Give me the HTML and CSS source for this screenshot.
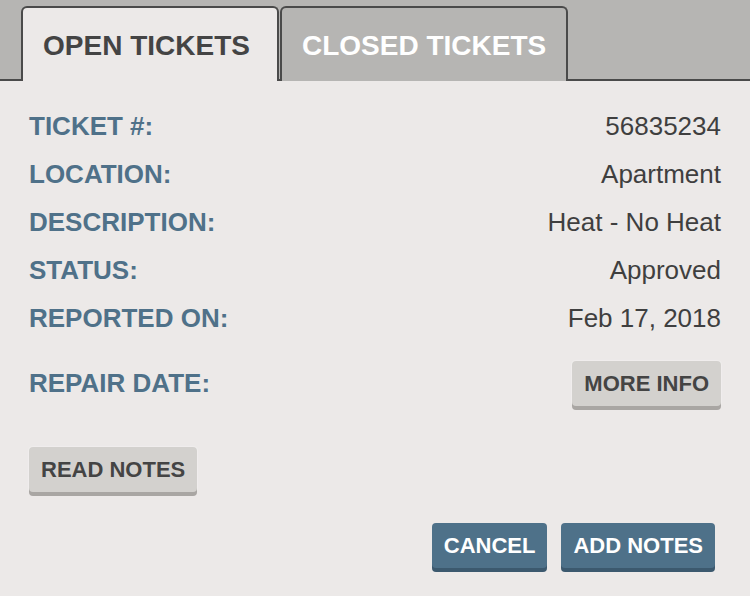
FILE: index.html
```html
<!DOCTYPE html>
<html>
<head>
<meta charset="utf-8">
<link rel="stylesheet" href="styles.css">
</head>
<body>
<div class="page">
  <div class="tabs">
    <div class="tab tab-active">OPEN TICKETS</div>
    <div class="tab tab-inactive">CLOSED TICKETS</div>
  </div>
  <div class="content">
    <div class="row"><span class="label">TICKET #:</span><span class="value">56835234</span></div>
    <div class="row"><span class="label">LOCATION:</span><span class="value">Apartment</span></div>
    <div class="row"><span class="label">DESCRIPTION:</span><span class="value">Heat - No Heat</span></div>
    <div class="row"><span class="label">STATUS:</span><span class="value">Approved</span></div>
    <div class="row"><span class="label">REPORTED ON:</span><span class="value">Feb 17, 2018</span></div>
    <div class="row row-repair"><span class="label">REPAIR DATE:</span><button class="btn btn-gray">MORE INFO</button></div>
    <div class="notes-row"><button class="btn btn-gray">READ NOTES</button></div>
    <div class="actions">
      <button class="btn btn-blue">CANCEL</button>
      <button class="btn btn-blue">ADD NOTES</button>
    </div>
  </div>
</div>
</body>
</html>
```
FILE: styles.css
```css
* { box-sizing: border-box; }
html, body {
  margin: 0;
  padding: 0;
  background: #ece9e8;
  font-family: "Liberation Sans", Arial, Helvetica, sans-serif;
}
.page {
  width: 750px;
  height: 596px;
  overflow: hidden;
}
.tabs {
  display: flex;
  align-items: flex-end;
  height: 81px;
  padding-left: 21px;
  background: #b6b5b3;
  border-bottom: 2px solid #4a4a4a;
  gap: 1px;
}
.tab {
  height: 75px;
  margin-bottom: -2px;
  border: 2px solid #4a4a4a;
  border-bottom: none;
  border-radius: 6px 6px 0 0;
  display: flex;
  align-items: center;
  padding: 3px 0 0 20px;
  font-size: 28px;
  font-weight: bold;
}
.tab-active {
  width: 258px;
  background: #ece9e8;
  color: #444;
}
.tab-inactive {
  width: 288px;
  background: #b6b5b3;
  color: #fff;
}
.content {
  padding: 21px 29px 0 29px;
}
.row {
  display: flex;
  justify-content: space-between;
  align-items: center;
  height: 48px;
  font-size: 26px;
}
.label {
  font-weight: bold;
  color: #4f7189;
}
.value {
  color: #3f3f3f;
}
.row-repair {
  margin-top: 19px;
  height: 49px;
  align-items: flex-start;
}
.row-repair .label {
  line-height: 45px;
}
.btn {
  font-family: inherit;
  font-weight: bold;
  font-size: 22px;
  height: 45px;
  padding: 0 12px;
  border: none;
  border-radius: 4px;
  cursor: pointer;
}
.btn-gray {
  background: #d3d1ce;
  color: #444;
  box-shadow: 0 4px 0 #a9a6a3, 0 0 2px rgba(255,255,255,0.8);
}
.btn-blue {
  background: #4e7189;
  color: #fff;
  box-shadow: 0 4px 0 #3c596e;
}
.notes-row {
  margin-top: 37px;
  display: flex;
}
.actions {
  margin-top: 31px;
  display: flex;
  justify-content: flex-end;
  gap: 14px;
  padding-right: 6px;
}
```
